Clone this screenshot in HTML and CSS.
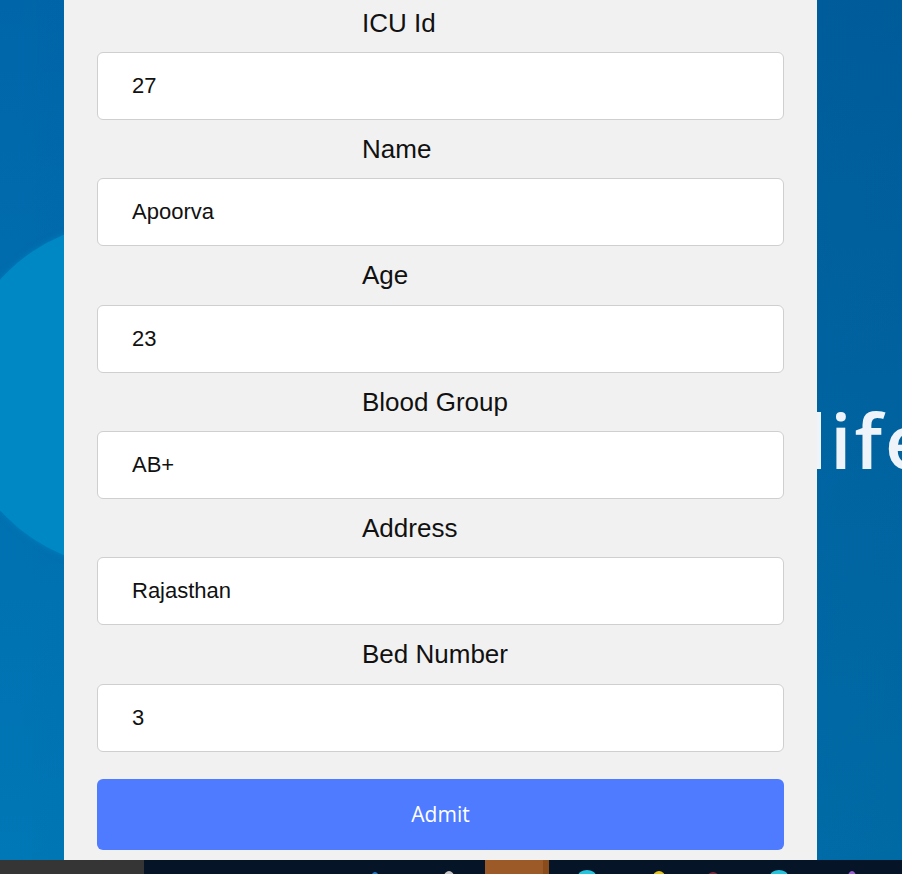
FILE: index.html
```html
<!DOCTYPE html>
<html lang="en">
<head>
<meta charset="utf-8">
<title>ICU Admit</title>
<link rel="stylesheet" href="styles.css">
</head>
<body>
<div class="desktop">
  <div class="bg-circle"></div>
  <div class="bg-word">life</div>
  <main class="panel">
    <form class="form">
      <label class="label" for="icu">ICU Id</label>
      <input class="field" id="icu" type="text" value="27">
      <label class="label" for="name">Name</label>
      <input class="field" id="name" type="text" value="Apoorva">
      <label class="label" for="age">Age</label>
      <input class="field" id="age" type="text" value="23">
      <label class="label" for="blood">Blood Group</label>
      <input class="field" id="blood" type="text" value="AB+">
      <label class="label" for="addr">Address</label>
      <input class="field" id="addr" type="text" value="Rajasthan">
      <label class="label" for="bed">Bed Number</label>
      <input class="field" id="bed" type="text" value="3">
      <button class="admit" type="button">Admit</button>
    </form>
  </main>
</div>
<footer class="taskbar">
  <div class="tb-start"></div>
  <div class="tb-area tb-a">
    <span class="tb-icon ic-blue"></span>
    <span class="tb-icon ic-white"></span>
  </div>
  <div class="tb-active"></div>
  <div class="tb-area tb-b">
    <span class="tb-icon ic-cyan"></span>
    <span class="tb-icon ic-yellow"></span>
    <span class="tb-icon ic-red"></span>
    <span class="tb-icon ic-cyan2"></span>
    <span class="tb-icon ic-purple"></span>
  </div>
</footer>
</body>
</html>
```
FILE: styles.css
```css
* { box-sizing: border-box; }
html, body { margin: 0; padding: 0; }
body {
  width: 902px;
  height: 874px;
  overflow: hidden;
  font-family: "Liberation Sans", Arial, sans-serif;
}
.desktop {
  position: relative;
  height: 860px;
  overflow: hidden;
  background:
    linear-gradient(to right, rgba(0, 10, 40, 0) 0%, rgba(0, 10, 40, 0.12) 100%),
    linear-gradient(to bottom, #0066a9 0%, #006fb0 50%, #0077b6 100%);
}
.bg-circle {
  position: absolute;
  left: -44px;
  top: 222px;
  width: 346px;
  height: 346px;
  border-radius: 50%;
  background: #0088c5;
  box-shadow: 0 0 6px rgba(0, 136, 197, 0.6);
}
.bg-word {
  position: absolute;
  left: 806px;
  top: 390px;
  font-family: "Open Sans", "DejaVu Sans", sans-serif;
  font-size: 76px;
  font-weight: 600;
  line-height: 100px;
  color: #eef4fa;
  letter-spacing: 3px;
  white-space: nowrap;
}
.panel {
  position: relative;
  z-index: 1;
  margin-left: 64px;
  width: 753px;
  height: 860px;
  background: #f1f1f1;
}
.form {
  display: flex;
  flex-direction: column;
  padding: 0 33px;
}
.label {
  display: block;
  margin: 14px 0 14.4px;
  padding-left: 265px;
  font-size: 26px;
  line-height: 30px;
  color: #111;
}
.label:first-child { margin-top: 7.5px; }
.field {
  display: block;
  width: 687px;
  height: 68px;
  margin: 0;
  padding: 0 0 0 34px;
  border: 1px solid #cfcfcf;
  border-radius: 6px;
  background: #fff;
  font-family: "Liberation Sans", Arial, sans-serif;
  font-size: 22px;
  color: #111;
  outline: none;
}
.admit {
  display: block;
  width: 687px;
  height: 71px;
  margin-top: 27px;
  border: none;
  border-radius: 6px;
  background: #4e7bff;
  color: #fff;
  font-family: "Open Sans", "DejaVu Sans", sans-serif;
  font-size: 21px;
  cursor: pointer;
}
.taskbar {
  display: flex;
  height: 14px;
  background: #061424;
}
.tb-start { width: 144px; background: #353535; }
.tb-area { position: relative; background: #051426; }
.tb-a { width: 341px; }
.tb-b { flex: 1; }
.tb-active {
  width: 64px;
  background: linear-gradient(to right, #9b5a28 0, #9b5a28 58px, #8b4c1c 58px);
}
.tb-icon {
  position: absolute;
  top: 11px;
  width: 12px;
  height: 12px;
  border-radius: 50%;
}
.ic-blue { left: 227px; width: 8px; background: #1e7fd0; top: 12px; }
.ic-white { left: 300px; width: 10px; background: #c9c9c9; }
.ic-cyan { left: 29px; width: 18px; background: #27c3dd; top: 10px; }
.ic-yellow { left: 104px; width: 12px; background: #e6c41c; }
.ic-red { left: 158px; width: 12px; background: #7a2a3a; top: 12px; }
.ic-cyan2 { left: 221px; width: 18px; background: #27c3dd; top: 10px; }
.ic-purple { left: 299px; width: 8px; background: #9a5fd6; }
```
